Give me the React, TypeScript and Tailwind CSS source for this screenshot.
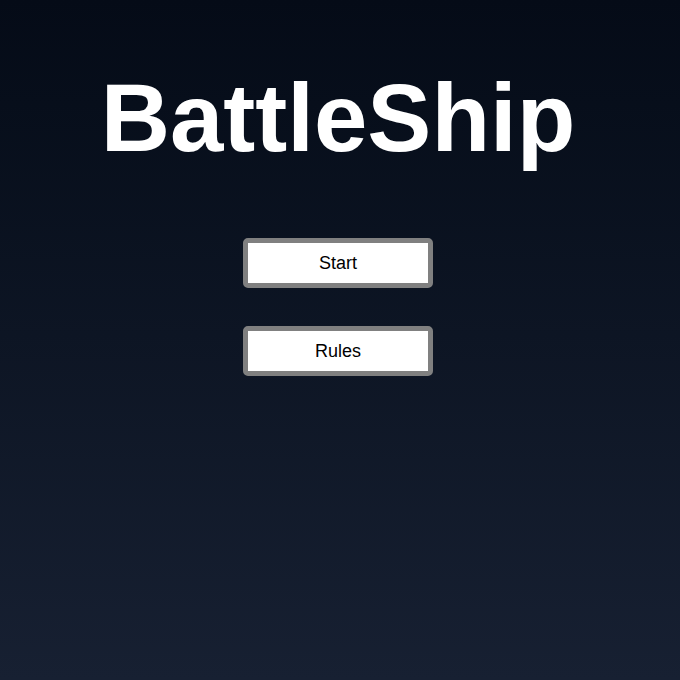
export default function App() {
  return (
    <div className="min-h-[680px] w-full bg-gradient-to-b from-[#050b17] to-[#172032] font-['Liberation_Sans',Arial,sans-serif] flex flex-col items-center pt-[70px] pr-1">
      <h1 className="text-[96px] leading-none font-bold text-white tracking-normal">BattleShip</h1>
      <div className="mt-[72px] flex flex-col items-center gap-[38px]">
        <button className="w-[190px] h-[50px] bg-white border-[5px] border-[#808080] rounded-[5px] text-[18px] text-black">
          Start
        </button>
        <button className="w-[190px] h-[50px] bg-white border-[5px] border-[#808080] rounded-[5px] text-[18px] text-black">
          Rules
        </button>
      </div>
    </div>
  );
}
